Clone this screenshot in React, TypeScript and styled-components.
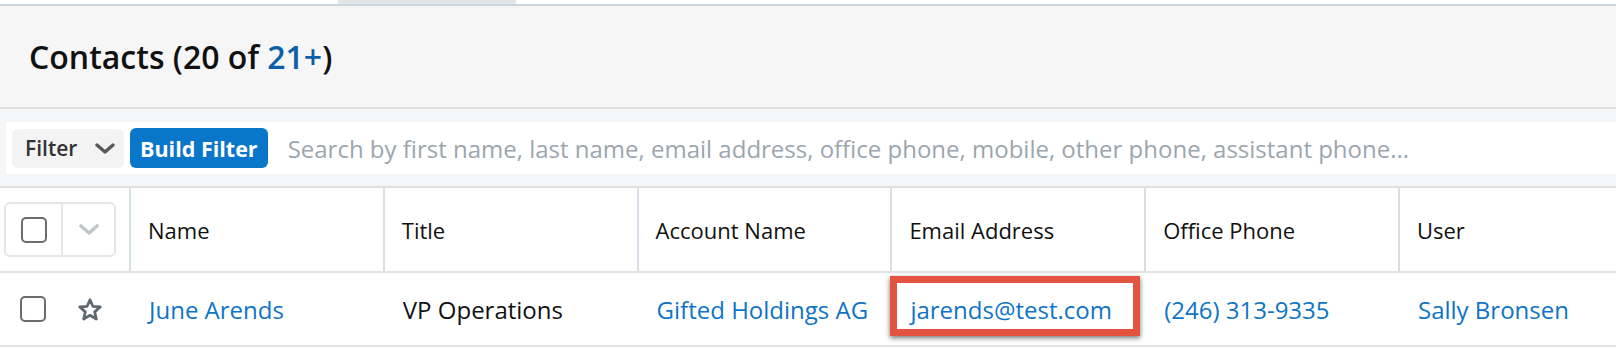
import React from "react";
import styled, { createGlobalStyle } from "styled-components";

const GlobalStyle = createGlobalStyle`
  html, body {
    margin: 0;
    padding: 0;
    background: #ffffff;
    font-family: "Open Sans", "Liberation Sans", sans-serif;
  }
  #root {
    height: 348px;
    overflow: hidden;
  }
`;

const Page = styled.div`
  display: flex;
  flex-direction: column;
  width: 1616px;
  & > * {
    flex-shrink: 0;
  }
`;

const TopStrip = styled.div`
  display: flex;
  height: 4px;
  background: #ffffff;
  border-bottom: 2px solid #ccd5de;
`;

const Tab = styled.div`
  margin-left: 338px;
  width: 178px;
  background: #e1e6e9;
`;

const Header = styled.div`
  display: flex;
  align-items: center;
  height: 101px;
  padding-left: 29px;
  background: #f6f6f6;
  border-bottom: 2px solid #dedede;
`;

const Title = styled.h1`
  margin: 0;
  font-size: 32px;
  font-weight: 600;
  color: #111111;
`;

const Count = styled.span`
  color: #0b5fa5;
`;

const FilterArea = styled.div`
  padding: 13px 0 12px 6px;
  background: #f5f6f7;
  border-bottom: 2px solid #dfdfdf;
`;

const SearchBox = styled.div`
  display: flex;
  align-items: center;
  height: 52px;
  padding-left: 6px;
  background: #ffffff;
`;

const FilterButton = styled.button`
  display: flex;
  align-items: center;
  justify-content: space-between;
  width: 112px;
  height: 39px;
  padding: 0 9px 0 13px;
  border: none;
  border-radius: 6px;
  background: #f3f3f3;
  color: #333333;
  font-family: inherit;
  font-size: 21px;
  font-weight: 600;
`;

const BuildButton = styled.button`
  height: 40px;
  margin-left: 6px;
  padding: 0 10px;
  border: none;
  border-radius: 6px;
  background: #0a76c9;
  color: #ffffff;
  font-family: inherit;
  font-size: 21.5px;
  font-weight: 700;
  white-space: nowrap;
`;

const SearchInput = styled.input`
  flex: 1;
  height: 40px;
  margin-left: 20px;
  padding: 0;
  border: none;
  outline: none;
  background: transparent;
  font-family: inherit;
  font-size: 24px;
  color: #333333;
  &::placeholder {
    color: #9ba6af;
  }
`;

const Row = styled.div<{ $height: number }>`
  display: grid;
  grid-template-columns: 129px repeat(5, 253.8px) 1fr;
  grid-template-rows: 100%;
  height: ${(p) => p.$height}px;
  border-bottom: 2px solid #e2e2e2;
  background: #ffffff;
`;

const HeadCell = styled.div`
  display: flex;
  align-items: center;
  padding-left: 17px;
  border-left: 2px solid #d6dee6;
  font-size: 22px;
  color: #111111;
  white-space: nowrap;
`;

const Cell = styled.div<{ $link?: boolean }>`
  position: relative;
  display: flex;
  align-items: center;
  padding-left: 20px;
  font-size: 24px;
  color: ${(p) => (p.$link ? "#0f74c6" : "#111111")};
  white-space: nowrap;
`;

const SelectCell = styled.div`
  display: flex;
  align-items: center;
  padding-left: 4px;
`;

const SelectGroup = styled.div`
  display: flex;
  width: 112px;
  height: 55px;
  box-sizing: border-box;
  border: 2px solid #e6e6e6;
  border-radius: 6px;
`;

const SelectPart = styled.div<{ $divider?: boolean }>`
  display: flex;
  align-items: center;
  justify-content: center;
  flex: ${(p) => (p.$divider ? "1" : "0 0 55px")};
  border-left: ${(p) => (p.$divider ? "2px solid #e6e6e6" : "none")};
`;

const Checkbox = styled.span`
  display: block;
  width: 26px;
  height: 26px;
  box-sizing: border-box;
  border: 2.5px solid #6c6c6c;
  border-radius: 5px;
  background: #ffffff;
`;

const RowActions = styled.div`
  display: flex;
  align-items: center;
  gap: 32px;
  padding-left: 20px;
`;

const Highlight = styled.div`
  position: absolute;
  top: 3px;
  left: 0;
  right: 4px;
  bottom: 9px;
  border: 7px solid #e4533f;
  box-shadow: 0 2px 5px rgba(0, 0, 0, 0.55);
  pointer-events: none;
`;

const Chevron = ({ color, w, h, stroke }: { color: string; w: number; h: number; stroke: number }) => (
  <svg width={w} height={h} viewBox="0 0 20 11" fill="none">
    <polyline
      points="2,2 10,9 18,2"
      stroke={color}
      strokeWidth={stroke}
      strokeLinecap="round"
      strokeLinejoin="round"
    />
  </svg>
);

const Star = () => (
  <svg width="24" height="23" viewBox="0 0 24 23" fill="none">
    <polygon
      points="12,1.8 14.9,8.3 22.2,9 16.7,13.9 18.3,21 12,17.3 5.7,21 7.3,13.9 1.8,9 9.1,8.3"
      stroke="#5e6a72"
      strokeWidth="2.8"
      strokeLinejoin="round"
    />
  </svg>
);

const columns = ["Name", "Title", "Account Name", "Email Address", "Office Phone", "User"];

export default function App() {
  return (
    <>
      <GlobalStyle />
      <Page>
        <TopStrip>
          <Tab />
        </TopStrip>
        <Header>
          <Title>
            Contacts (20 of <Count>21+</Count>)
          </Title>
        </Header>
        <FilterArea>
          <SearchBox>
            <FilterButton>
              Filter
              <Chevron color="#5a5a5a" w={20} h={11} stroke={3.4} />
            </FilterButton>
            <BuildButton>Build Filter</BuildButton>
            <SearchInput placeholder="Search by first name, last name, email address, office phone, mobile, other phone, assistant phone..." />
          </SearchBox>
        </FilterArea>
        <Row $height={83}>
          <SelectCell>
            <SelectGroup>
              <SelectPart>
                <Checkbox />
              </SelectPart>
              <SelectPart $divider>
                <Chevron color="#c2c6ca" w={20} h={11} stroke={3.6} />
              </SelectPart>
            </SelectGroup>
          </SelectCell>
          {columns.map((c) => (
            <HeadCell key={c}>{c}</HeadCell>
          ))}
        </Row>
        <Row $height={72}>
          <RowActions>
            <Checkbox />
            <Star />
          </RowActions>
          <Cell $link>June Arends</Cell>
          <Cell>VP Operations</Cell>
          <Cell $link>Gifted Holdings AG</Cell>
          <Cell $link>
            jarends@test.com
            <Highlight />
          </Cell>
          <Cell $link>(246) 313-9335</Cell>
          <Cell $link>Sally Bronsen</Cell>
        </Row>
      </Page>
    </>
  );
}
